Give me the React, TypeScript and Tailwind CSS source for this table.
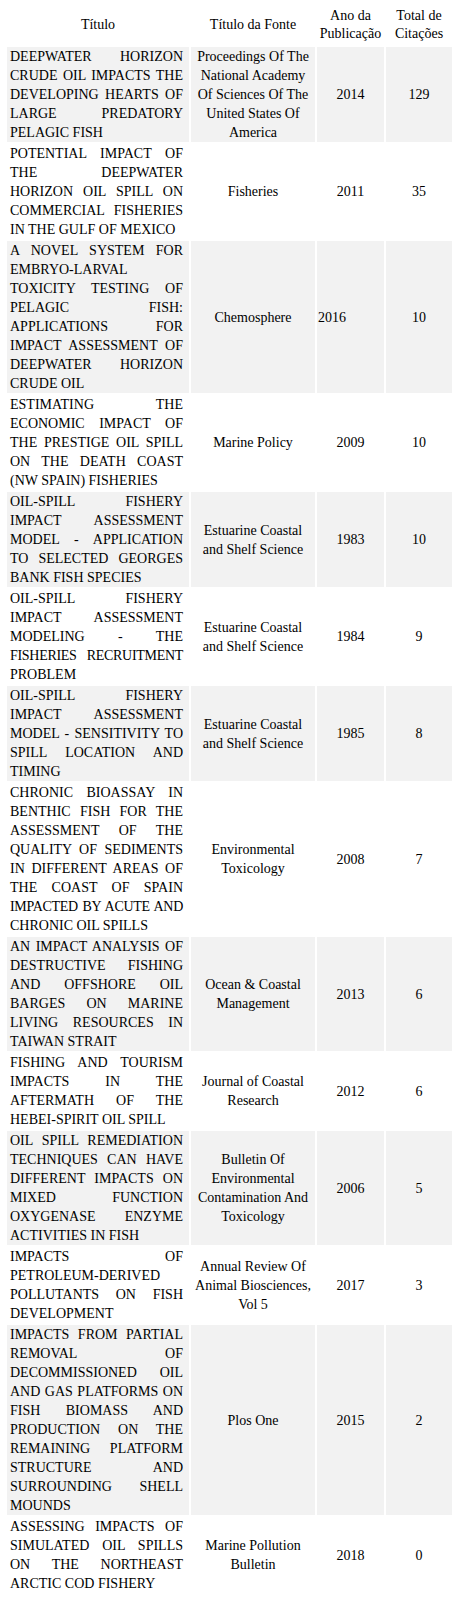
const rows: [string[], string, string, string][] = [
  [["DEEPWATER HORIZON", "CRUDE OIL IMPACTS THE", "DEVELOPING HEARTS OF", "LARGE PREDATORY", "PELAGIC FISH"], "Proceedings Of The National Academy Of Sciences Of The United States Of America", "2014", "129"],
  [["POTENTIAL IMPACT OF", "THE DEEPWATER", "HORIZON OIL SPILL ON", "COMMERCIAL FISHERIES", "IN THE GULF OF MEXICO"], "Fisheries", "2011", "35"],
  [["A NOVEL SYSTEM FOR", "EMBRYO-LARVAL", "TOXICITY TESTING OF", "PELAGIC FISH:", "APPLICATIONS FOR", "IMPACT ASSESSMENT OF", "DEEPWATER HORIZON", "CRUDE OIL"], "Chemosphere", "2016", "10"],
  [["ESTIMATING THE", "ECONOMIC IMPACT OF", "THE PRESTIGE OIL SPILL", "ON THE DEATH COAST", "(NW SPAIN) FISHERIES"], "Marine Policy", "2009", "10"],
  [["OIL-SPILL FISHERY", "IMPACT ASSESSMENT", "MODEL - APPLICATION", "TO SELECTED GEORGES", "BANK FISH SPECIES"], "Estuarine Coastal and Shelf Science", "1983", "10"],
  [["OIL-SPILL FISHERY", "IMPACT ASSESSMENT", "MODELING - THE", "FISHERIES RECRUITMENT", "PROBLEM"], "Estuarine Coastal and Shelf Science", "1984", "9"],
  [["OIL-SPILL FISHERY", "IMPACT ASSESSMENT", "MODEL - SENSITIVITY TO", "SPILL LOCATION AND", "TIMING"], "Estuarine Coastal and Shelf Science", "1985", "8"],
  [["CHRONIC BIOASSAY IN", "BENTHIC FISH FOR THE", "ASSESSMENT OF THE", "QUALITY OF SEDIMENTS", "IN DIFFERENT AREAS OF", "THE COAST OF SPAIN", "IMPACTED BY ACUTE AND", "CHRONIC OIL SPILLS"], "Environmental Toxicology", "2008", "7"],
  [["AN IMPACT ANALYSIS OF", "DESTRUCTIVE FISHING", "AND OFFSHORE OIL", "BARGES ON MARINE", "LIVING RESOURCES IN", "TAIWAN STRAIT"], "Ocean & Coastal Management", "2013", "6"],
  [["FISHING AND TOURISM", "IMPACTS IN THE", "AFTERMATH OF THE", "HEBEI-SPIRIT OIL SPILL"], "Journal of Coastal Research", "2012", "6"],
  [["OIL SPILL REMEDIATION", "TECHNIQUES CAN HAVE", "DIFFERENT IMPACTS ON", "MIXED FUNCTION", "OXYGENASE ENZYME", "ACTIVITIES IN FISH"], "Bulletin Of Environmental Contamination And Toxicology", "2006", "5"],
  [["IMPACTS OF", "PETROLEUM-DERIVED", "POLLUTANTS ON FISH", "DEVELOPMENT"], "Annual Review Of Animal Biosciences, Vol 5", "2017", "3"],
  [["IMPACTS FROM PARTIAL", "REMOVAL OF", "DECOMMISSIONED OIL", "AND GAS PLATFORMS ON", "FISH BIOMASS AND", "PRODUCTION ON THE", "REMAINING PLATFORM", "STRUCTURE AND", "SURROUNDING SHELL", "MOUNDS"], "Plos One", "2015", "2"],
  [["ASSESSING IMPACTS OF", "SIMULATED OIL SPILLS", "ON THE NORTHEAST", "ARCTIC COD FISHERY"], "Marine Pollution Bulletin", "2018", "0"],
];

// lines that run a bit wide in Liberation Serif
const tight = new Set(["IMPACTED BY ACUTE AND", "FISHERIES RECRUITMENT"]);

function Title({ lines }: { lines: string[] }) {
  return (
    <>
      {lines.map((line, j) => (
        <span
          key={j}
          className={`block whitespace-nowrap ${
            j === lines.length - 1 ? "text-left" : "text-justify [text-align-last:justify]"
          } ${tight.has(line) ? "tracking-[-0.3px]" : ""}`}
        >
          {line}
        </span>
      ))}
    </>
  );
}

export default function App() {
  return (
    <div className="bg-white px-[5px] text-[14px] text-black [font-family:'Liberation_Serif',serif]">
      <table className="w-[449px] table-fixed border-separate border-spacing-[2px]">
        <colgroup>
          <col className="w-[182px]" />
          <col className="w-[124px]" />
          <col className="w-[67px]" />
          <col className="w-[66px]" />
        </colgroup>
        <thead>
          <tr className="leading-[18px]">
            <th className="pt-[5px] pb-[2px] text-center font-normal align-middle">Título</th>
            <th className="pt-[5px] pb-[2px] text-center font-normal align-middle">Título da Fonte</th>
            <th className="pt-[5px] pb-[2px] text-center font-normal align-middle">Ano da Publicação</th>
            <th className="pt-[5px] pb-[2px] text-center font-normal align-middle">Total de Citações</th>
          </tr>
        </thead>
        <tbody>
          {rows.map(([title, source, year, total], i) => {
            const bg = i % 2 === 0 ? "bg-[#f2f2f2]" : "bg-white";
            return (
              <tr key={i} className="leading-[19px]">
                <td className={`${bg} pl-[3px] pr-[6px] py-0 align-middle`}>
                  <Title lines={title} />
                </td>
                <td className={`${bg} px-[3px] py-0 text-center align-middle`}>{source}</td>
                <td className={`${bg} px-[1px] py-0 align-middle ${i === 2 ? "text-left" : "text-center"}`}>{year}</td>
                <td className={`${bg} px-[1px] py-0 text-center align-middle`}>{total}</td>
              </tr>
            );
          })}
        </tbody>
      </table>
    </div>
  );
}
